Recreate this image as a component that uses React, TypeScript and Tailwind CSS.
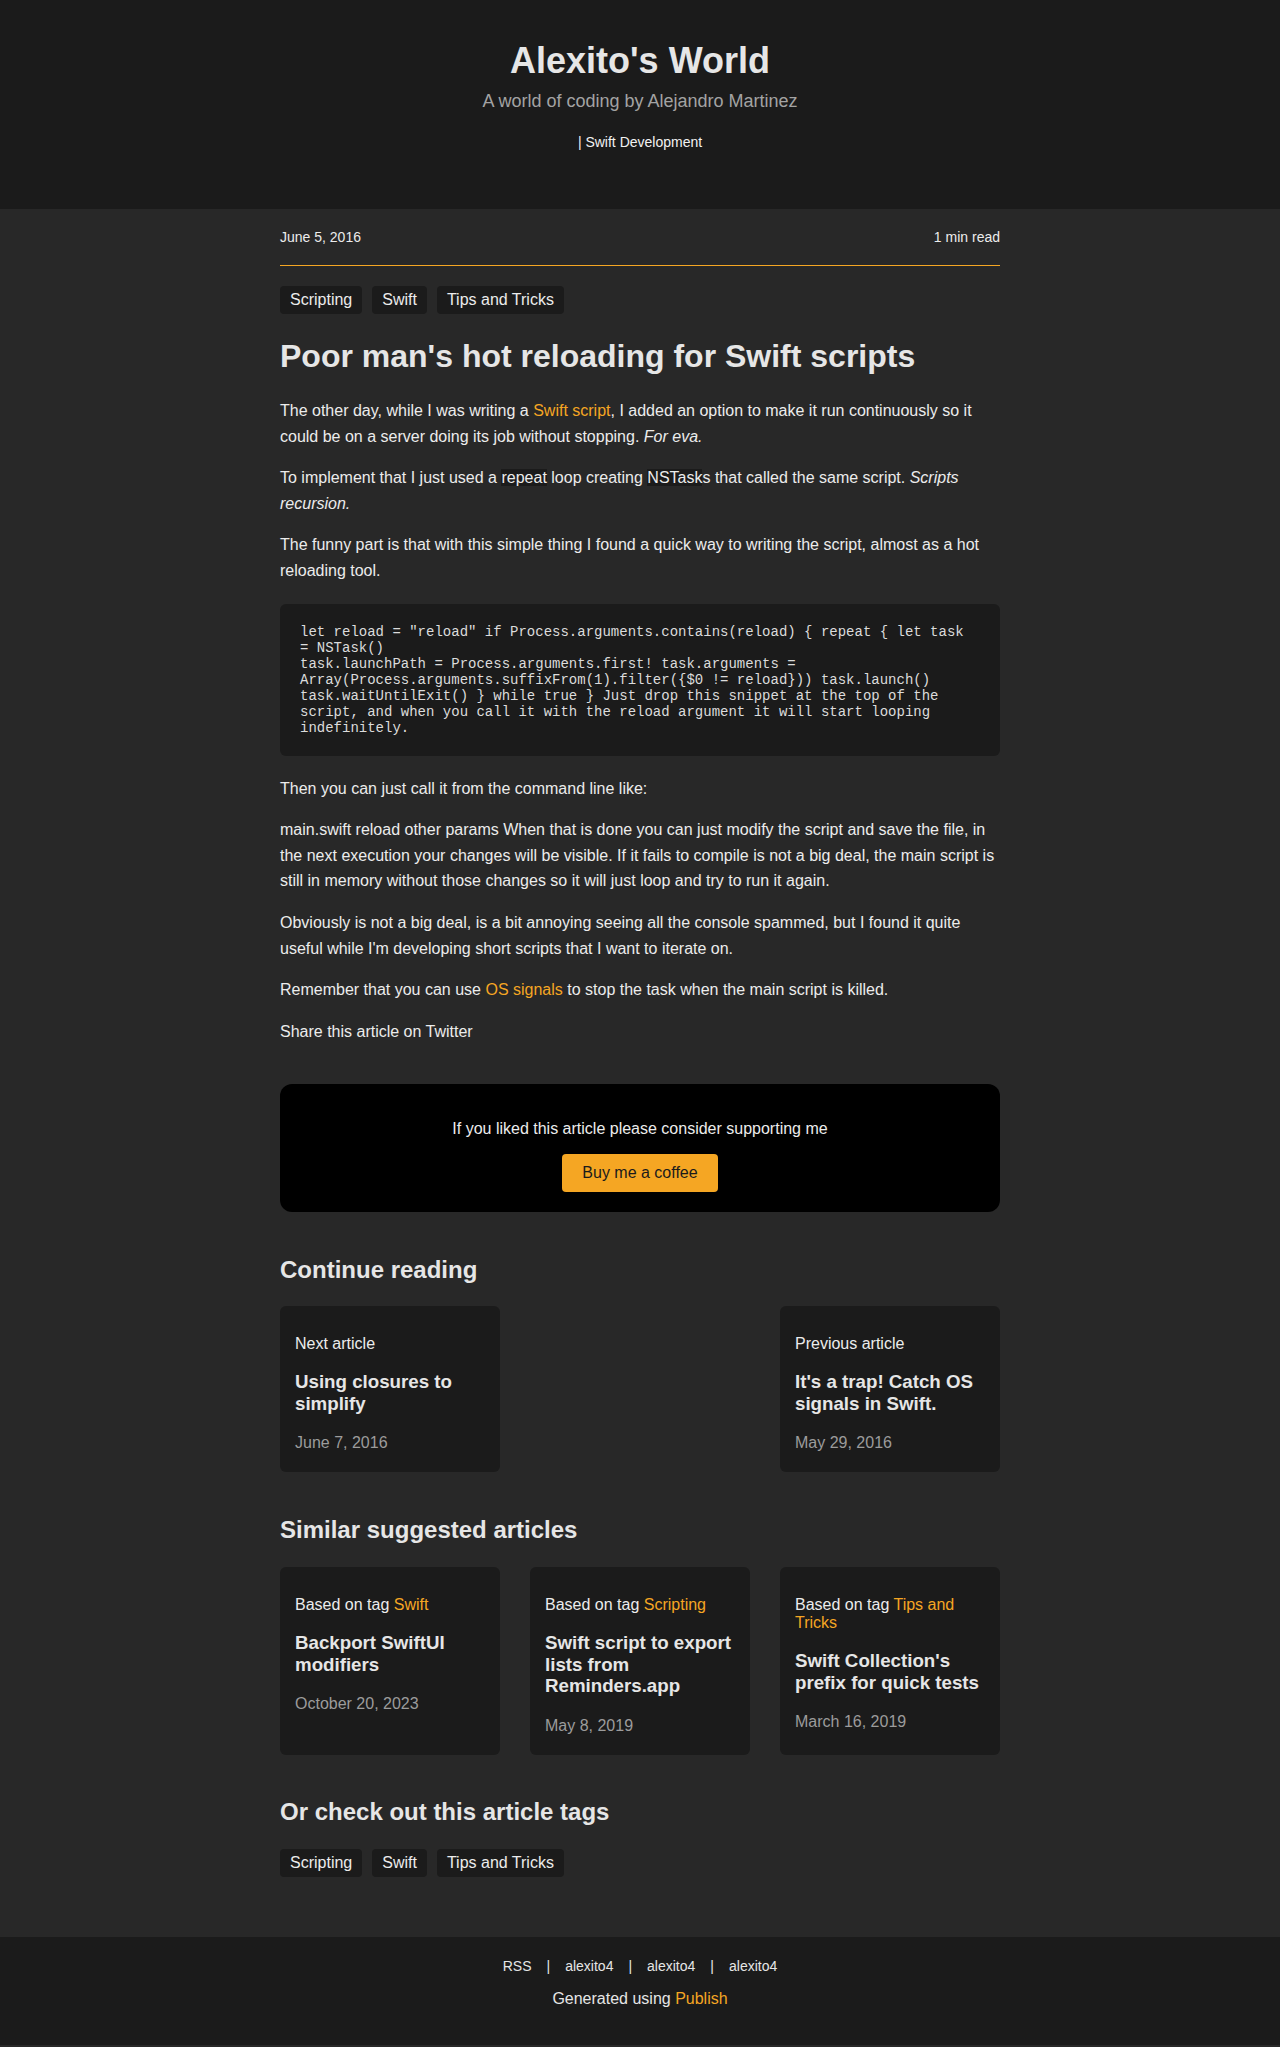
const tags = ['Scripting', 'Swift', 'Tips and Tricks'];

const similar = [
  { tag: 'Swift', title: 'Backport SwiftUI modifiers', date: 'October 20, 2023' },
  { tag: 'Scripting', title: 'Swift script to export lists from Reminders.app', date: 'May 8, 2019' },
  { tag: 'Tips and Tricks', title: "Swift Collection's prefix for quick tests", date: 'March 16, 2019' },
];

const codeLines = [
  'let reload = "reload" if Process.arguments.contains(reload) { repeat { let task',
  '= NSTask()',
  'task.launchPath = Process.arguments.first! task.arguments =',
  'Array(Process.arguments.suffixFrom(1).filter({$0 != reload})) task.launch()',
  'task.waitUntilExit() } while true } Just drop this snippet at the top of the',
  'script, and when you call it with the reload argument it will start looping',
  'indefinitely.',
];

function TagList({ className }: { className?: string }) {
  return (
    <div className={`flex gap-[10px] ${className ?? ''}`}>
      {tags.map((t) => (
        <span key={t} className="bg-[#1b1b1b] text-[#ececec] text-[16px] leading-[18px] px-[10px] py-[5px] rounded-[4px]">
          {t}
        </span>
      ))}
    </div>
  );
}

function Card({ label, title, date }: { label: React.ReactNode; title: string; date: string }) {
  return (
    <div className="bg-[#1b1b1b] rounded-[6px] px-[15px] pt-[29px] pb-5">
      <p className="text-[16px] leading-[18px] text-[#ececec]">{label}</p>
      <h3 className="mt-[18px] text-[18.72px] leading-[21.6px] font-bold text-[#e6e6e6]">{title}</h3>
      <p className="mt-5 text-[16px] leading-[18px] text-[#9c9c9c]">{date}</p>
    </div>
  );
}

function Code({ children }: { children: string }) {
  return <span className="bg-[#1b1b1b]">{children}</span>;
}

export default function App() {
  return (
    <div className="min-h-screen bg-[#282828] font-['Liberation_Sans',Arial,sans-serif]">
      <header className="h-[209px] bg-[#1b1b1b] flex flex-col items-center">
        <h1 className="mt-[40px] text-[36px] leading-[42px] font-bold text-[#e6e6e6]">Alexito's World</h1>
        <p className="mt-[9px] text-[18px] leading-[21px] text-[#a3a3a3]">A world of coding by Alejandro Martinez</p>
        <p className="mt-[22px] text-[14px] leading-[16px] text-[#f2f2f2]">| Swift Development</p>
      </header>

      <main className="w-[720px] mx-auto pt-5 pb-[60px] text-[#ececec]">
        <div className="flex justify-between text-[14px] leading-[16px] pb-5 border-b border-[#f5a623]">
          <span>June 5, 2016</span>
          <span>1 min read</span>
        </div>

        <TagList className="mt-5" />

        <h1 className="mt-[24px] text-[32px] leading-[37px] font-bold text-[#e6e6e6]">
          Poor man's hot reloading for Swift scripts
        </h1>

        <div className="mt-[23px] text-[16px] leading-[1.6] flex flex-col gap-4">
          <p>
            The other day, while I was writing a <span className="text-[#f5a623]">Swift script</span>, I added an
            option to make it run continuously so it could be on a server doing its job without stopping.{' '}
            <em>For eva.</em>
          </p>
          <p>
            To implement that I just used a <Code>repeat</Code> loop creating <Code>NSTask</Code>s that called the
            same script. <em>Scripts recursion.</em>
          </p>
          <p>
            The funny part is that with this simple thing I found a quick way to writing the script, almost as a hot
            reloading tool.
          </p>
          <pre className="my-1 bg-[#1b1b1b] rounded-[6px] p-5 font-['Liberation_Mono',monospace] text-[14px] leading-[16px] text-[#dcdcdc] whitespace-pre">
            {codeLines.join('\n')}
          </pre>
          <p>Then you can just call it from the command line like:</p>
          <p>
            main.swift reload other params When that is done you can just modify the script and save the file, in the
            next execution your changes will be visible. If it fails to compile is not a big deal, the main script is
            still in memory without those changes so it will just loop and try to run it again.
          </p>
          <p>
            Obviously is not a big deal, is a bit annoying seeing all the console spammed, but I found it quite useful
            while I'm developing short scripts that I want to iterate on.
          </p>
          <p>
            Remember that you can use <span className="text-[#f5a623]">OS signals</span> to stop the task when the
            main script is killed.
          </p>
          <p>Share this article on Twitter</p>
        </div>

        <div className="mt-[40px] bg-black rounded-[12px] pt-[32px] pb-5 flex flex-col items-center">
          <p className="text-[16px] leading-[1.6] text-[#ececec]">If you liked this article please consider supporting me</p>
          <button className="mt-3 bg-[#f5a623] text-[#1b1b1b] text-[16px] leading-[18px] px-5 py-[10px] rounded-[4px]">
            Buy me a coffee
          </button>
        </div>

        <h2 className="mt-[44px] text-[24px] leading-[28px] font-bold text-[#e6e6e6]">Continue reading</h2>
        <div className="mt-[22px] grid grid-cols-3 gap-[30px]">
          <Card label="Next article" title="Using closures to simplify" date="June 7, 2016" />
          <div className="col-start-3">
            <Card label="Previous article" title="It's a trap! Catch OS signals in Swift." date="May 29, 2016" />
          </div>
        </div>

        <h2 className="mt-[44px] text-[24px] leading-[28px] font-bold text-[#e6e6e6]">Similar suggested articles</h2>
        <div className="mt-[23px] grid grid-cols-3 gap-[30px]">
          {similar.map((s) => (
            <Card
              key={s.title}
              label={
                <>
                  Based on tag <span className="text-[#f5a623]">{s.tag}</span>
                </>
              }
              title={s.title}
              date={s.date}
            />
          ))}
        </div>

        <h2 className="mt-[43px] text-[24px] leading-[28px] font-bold text-[#e6e6e6]">Or check out this article tags</h2>
        <TagList className="mt-[23px]" />
      </main>

      <footer className="bg-[#1b1b1b] pt-[21px] pb-[37px] flex flex-col items-center">
        <div className="flex items-center text-[14px] leading-[16px] text-[#e6e6e6]">
          <span>RSS</span>
          <span className="mx-[15px]">|</span>
          <span>alexito4</span>
          <span className="mx-[15px]">|</span>
          <span>alexito4</span>
          <span className="mx-[15px]">|</span>
          <span>alexito4</span>
        </div>
        <p className="mt-4 text-[16px] leading-[18px] text-[#e6e6e6]">
          Generated using <span className="text-[#f5a623]">Publish</span>
        </p>
      </footer>
    </div>
  );
}
